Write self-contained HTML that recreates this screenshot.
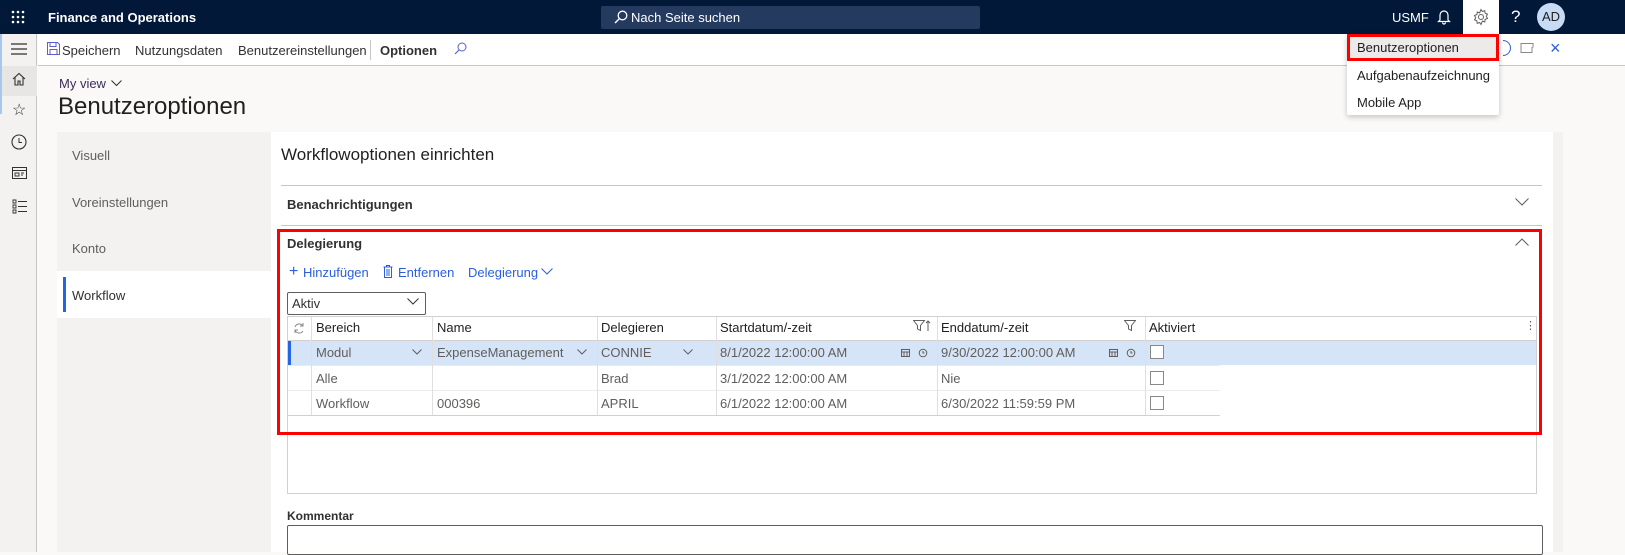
<!DOCTYPE html>
<html><head><meta charset="utf-8"><style>
*{box-sizing:border-box;margin:0;padding:0}
body{width:1625px;height:552px;overflow:hidden;background:#faf9f8;font-family:"Liberation Sans",sans-serif;font-size:13px;color:#323130;position:relative}
.a{position:absolute;white-space:nowrap}
.top{left:0;top:0;width:1625px;height:34px;background:#011839}
.w{color:#fff}
.cell{position:absolute;height:25px;line-height:25px;padding-left:5px;border-right:1px solid #e1dfdd;font-size:13px}
.chk{position:absolute;width:14px;height:14px;border:1px solid #8a8886;background:#fff}
</style></head><body>
<div class="a top"></div>
<svg class="a" style="left:11px;top:10px" width="14" height="14"><g fill="#fff"><circle cx="2" cy="2" r="1.3"/><circle cx="7" cy="2" r="1.3"/><circle cx="12" cy="2" r="1.3"/><circle cx="2" cy="7" r="1.3"/><circle cx="7" cy="7" r="1.3"/><circle cx="12" cy="7" r="1.3"/><circle cx="2" cy="12" r="1.3"/><circle cx="7" cy="12" r="1.3"/><circle cx="12" cy="12" r="1.3"/></g></svg>
<div class="a w" style="left:48px;top:10px;font-weight:bold;font-size:13px">Finance and Operations</div>
<div class="a" style="left:601px;top:6px;width:379px;height:23px;background:#243a5e;border-radius:2px"></div>
<svg class="a" style="left:614px;top:10px" width="14" height="14"><circle cx="8.5" cy="5.5" r="4.3" fill="none" stroke="#fff" stroke-width="1.3"/><path d="M5.5 8.5L1 13" stroke="#fff" stroke-width="1.5"/></svg>
<div class="a w" style="left:631px;top:10px;font-size:13px">Nach Seite suchen</div>
<div class="a w" style="left:1392px;top:10px;font-size:13px">USMF</div>
<svg class="a" style="left:1437px;top:9px" width="14" height="16"><path d="M3 11V6a4 4 0 0 1 8 0v5l1.5 1.5h-11z M5.5 13.5a1.5 1.5 0 0 0 3 0" fill="none" stroke="#fff" stroke-width="1.2"/></svg>
<div class="a" style="left:1463px;top:0;width:36px;height:34px;background:#fff"></div>
<svg class="a" style="left:1472px;top:8px" width="18" height="18" viewBox="0 0 18 18"><circle cx="9" cy="9" r="2.5" fill="none" stroke="#605e5c"/><path d="M9 1.5l1.4 2 2.4-.8.3 2.5 2.4.9-1.2 2.2 1.2 2.2-2.4.9-.3 2.5-2.4-.8L9 16.5l-1.4-2-2.4.8-.3-2.5-2.4-.9L3.7 9.7 2.5 7.5l2.4-.9.3-2.5 2.4.8z" fill="none" stroke="#605e5c"/></svg>
<div class="a w" style="left:1511px;top:7px;font-size:17px">?</div>
<div class="a" style="left:1537px;top:3px;width:28px;height:28px;border-radius:50%;background:#c7dbf5;color:#201f1e;text-align:center;line-height:28px;font-size:13px">AD</div>

<!-- left rail -->
<div class="a" style="left:0;top:34px;width:37px;height:518px;background:#f3f2f1;border-right:1px solid #c8c6c4"></div>
<div class="a" style="left:0;top:34px;width:2px;height:80px;background:#a9c6ef"></div>
<svg class="a" style="left:10px;top:42px" width="18" height="14"><path d="M1 2h16M1 7h16M1 12h16" stroke="#323130" stroke-width="1.2"/></svg>
<div class="a" style="left:2px;top:66px;width:35px;height:30px;background:#e8e6e4"></div>
<svg class="a" style="left:12px;top:72px" width="14" height="14"><path d="M1 7L7 1.5 13 7M3 5.5V13h3V9h2v4h3V5.5" fill="none" stroke="#323130" stroke-width="1.1"/></svg>
<div class="a" style="left:12px;top:100px;font-size:16px;color:#323130">☆</div>
<svg class="a" style="left:11px;top:134px" width="16" height="16"><circle cx="8" cy="8" r="7" fill="none" stroke="#323130" stroke-width="1.1"/><path d="M8 4v4.5h3" fill="none" stroke="#323130"/></svg>
<svg class="a" style="left:12px;top:167px" width="16" height="13"><rect x=".5" y=".5" width="14" height="11" fill="none" stroke="#323130"/><path d="M.5 3.5h14M3 6h4v3H3zM9 6h3M9 8h2" fill="none" stroke="#323130" stroke-width=".9"/></svg>
<svg class="a" style="left:12px;top:198px" width="16" height="16"><path d="M1 2h3v3H1zM1 7h3v3H1zM1 12h3v3H1zM6 3.5h9M6 8.5h9M6 13.5h9" fill="none" stroke="#323130" stroke-width=".9"/></svg>

<!-- action bar -->
<div class="a" style="left:38px;top:34px;width:1587px;height:32px;background:#fff;border-bottom:1px solid #c8c6c4"></div>
<svg class="a" style="left:47px;top:42px" width="13" height="13"><path d="M.5.5h10l2 2v10H.5z M3 .5v4h6v-4 M3 12.5v-5h7v5" fill="none" stroke="#5b5fc7" stroke-width="1"/></svg>
<div class="a" style="left:62px;top:43px">Speichern</div>
<div class="a" style="left:135px;top:43px">Nutzungsdaten</div>
<div class="a" style="left:238px;top:43px">Benutzereinstellungen</div>
<div class="a" style="left:370px;top:40px;width:1px;height:20px;background:#c8c6c4"></div>
<div class="a" style="left:380px;top:43px;font-weight:bold">Optionen</div>
<svg class="a" style="left:454px;top:42px" width="13" height="13"><circle cx="8" cy="5" r="4" fill="none" stroke="#5b5fc7"/><path d="M5 8L1 12" stroke="#5b5fc7" stroke-width="1.2"/></svg>
<div class="a" style="left:1503px;top:40px;width:8px;height:16px;border:1.5px solid #2b5fd9;border-left:none;border-radius:0 8px 8px 0"></div>
<svg class="a" style="left:1520px;top:42px" width="14" height="12"><path d="M9 1.5H1v9h11V5M9 1.5h4v4" fill="none" stroke="#8a8886"/></svg>
<div class="a" style="left:1550px;top:38px;color:#2b5fd9;font-size:18px">×</div>

<!-- title -->
<div class="a" style="left:59px;top:76px;color:#3b2e58;font-size:13px">My view</div>
<svg class="a" style="left:111px;top:80px" width="11" height="7"><path d="M.5.5l5 5 5-5" fill="none" stroke="#323130"/></svg>
<div class="a" style="left:58px;top:93px;font-size:24px;color:#201f1e">Benutzeroptionen</div>

<!-- tabs -->
<div class="a" style="left:57px;top:132px;width:214px;height:420px;background:#f3f2f1"></div>
<div class="a" style="left:72px;top:148px;color:#605e5c">Visuell</div>
<div class="a" style="left:72px;top:195px;color:#605e5c">Voreinstellungen</div>
<div class="a" style="left:72px;top:241px;color:#605e5c">Konto</div>
<div class="a" style="left:57px;top:271px;width:214px;height:47px;background:#fff"></div>
<div class="a" style="left:63px;top:277px;width:3px;height:35px;background:#2266e3"></div>
<div class="a" style="left:72px;top:288px;color:#323130">Workflow</div>

<!-- main panel -->
<div class="a" style="left:271px;top:132px;width:1282px;height:420px;background:#fff"></div>
<div class="a" style="left:1553px;top:132px;width:10px;height:420px;background:#f3f2f1"></div>
<div class="a" style="left:281px;top:145px;font-size:17px;color:#201f1e">Workflowoptionen einrichten</div>
<div class="a" style="left:281px;top:185px;width:1261px;height:1px;background:#c8c6c4"></div>
<div class="a" style="left:287px;top:197px;font-weight:bold">Benachrichtigungen</div>
<svg class="a" style="left:1515px;top:198px" width="14" height="8"><path d="M.5.5l6.5 6.5 6.5-6.5" fill="none" stroke="#605e5c"/></svg>
<div class="a" style="left:281px;top:225px;width:1261px;height:1px;background:#c8c6c4"></div>
<div class="a" style="left:287px;top:236px;font-weight:bold">Delegierung</div>
<svg class="a" style="left:1515px;top:238px" width="14" height="8"><path d="M.5 7.5L7 1l6.5 6.5" fill="none" stroke="#605e5c"/></svg>
<div class="a" style="left:289px;top:264px;color:#2b5fd9;font-size:16px;line-height:16px">+</div>
<div class="a" style="left:303px;top:265px;color:#2b5fd9">Hinzufügen</div>
<svg class="a" style="left:383px;top:265px" width="10" height="13"><path d="M.5 2h9M3.5 2V.5h3V2M1.5 2v10.5h7V2M4 4v7M6 4v7" fill="none" stroke="#2b5fd9"/></svg>
<div class="a" style="left:398px;top:265px;color:#2b5fd9">Entfernen</div>
<div class="a" style="left:468px;top:265px;color:#2b5fd9">Delegierung</div>
<svg class="a" style="left:541px;top:268px" width="12" height="7"><path d="M.5.5l5.5 5.5 5.5-5.5" fill="none" stroke="#2b5fd9"/></svg>
<div class="a" style="left:287px;top:292px;width:139px;height:23px;border:1px solid #605e5c;border-radius:2px;background:#fff"></div>
<div class="a" style="left:292px;top:296px">Aktiv</div>
<svg class="a" style="left:407px;top:298px" width="12" height="7"><path d="M.5.5l5.5 5.5 5.5-5.5" fill="none" stroke="#323130"/></svg>

<!-- grid -->
<div class="a" style="left:287px;top:316px;width:1250px;height:178px;border:1px solid #d2d0ce;background:#fff"></div>
<div class="a" style="left:288px;top:340px;width:1248px;height:1px;background:#d2d0ce"></div>
<div class="a" style="left:288px;top:341px;width:1248px;height:24px;background:#d6e4f8"></div>
<div class="a" style="left:288px;top:341px;width:3px;height:24px;background:#2266e3"></div>
<div class="a" style="left:288px;top:365px;width:932px;height:1px;background:#edebe9"></div>
<div class="a" style="left:288px;top:390px;width:932px;height:1px;background:#edebe9"></div>
<div class="a" style="left:288px;top:415px;width:932px;height:1px;background:#d2d0ce"></div>
<!-- vertical lines -->
<div class="a" style="left:311px;top:317px;width:1px;height:98px;background:#e1dfdd"></div>
<div class="a" style="left:432px;top:317px;width:1px;height:98px;background:#e1dfdd"></div>
<div class="a" style="left:597px;top:317px;width:1px;height:98px;background:#e1dfdd"></div>
<div class="a" style="left:716px;top:317px;width:1px;height:98px;background:#e1dfdd"></div>
<div class="a" style="left:937px;top:317px;width:1px;height:98px;background:#e1dfdd"></div>
<div class="a" style="left:1145px;top:317px;width:1px;height:98px;background:#e1dfdd"></div>
<svg class="a" style="left:293px;top:322px" width="12" height="12"><path d="M10 4A4.5 4.5 0 0 0 2 5M2 8a4.5 4.5 0 0 0 8 1M10 1v3H7M2 11V8h3" fill="none" stroke="#8a8886"/></svg>
<div class="a" style="left:316px;top:320px;color:#201f1e">Bereich</div>
<div class="a" style="left:437px;top:320px;color:#201f1e">Name</div>
<div class="a" style="left:601px;top:320px;color:#201f1e">Delegieren</div>
<div class="a" style="left:720px;top:320px;color:#201f1e">Startdatum/-zeit</div>
<div class="a" style="left:941px;top:320px;color:#201f1e">Enddatum/-zeit</div>
<div class="a" style="left:1149px;top:320px;color:#201f1e">Aktiviert</div>
<svg class="a" style="left:913px;top:320px" width="18" height="12"><path d="M.5.5h11L7.5 5.5v5l-3-1.5V5.5z M15 11V1M13 3l2-2 2 2" fill="none" stroke="#605e5c"/></svg>
<svg class="a" style="left:1124px;top:320px" width="12" height="12"><path d="M.5.5h11L7.5 5.5v5l-3-1.5V5.5z" fill="none" stroke="#605e5c"/></svg>
<div class="a" style="left:1525px;top:319px;color:#605e5c;font-size:11px">⋮</div>
<!-- row1 -->
<div class="a" style="left:316px;top:345px;color:#605e5c">Modul</div>
<div class="a" style="left:437px;top:345px;color:#605e5c">ExpenseManagement</div>
<div class="a" style="left:601px;top:345px;color:#605e5c">CONNIE</div>
<div class="a" style="left:720px;top:345px;color:#605e5c">8/1/2022 12:00:00 AM</div>
<div class="a" style="left:941px;top:345px;color:#605e5c">9/30/2022 12:00:00 AM</div>
<svg class="a" style="left:412px;top:349px" width="10" height="6"><path d="M.5.5l4.5 4.5 4.5-4.5" fill="none" stroke="#605e5c"/></svg>
<svg class="a" style="left:577px;top:349px" width="10" height="6"><path d="M.5.5l4.5 4.5 4.5-4.5" fill="none" stroke="#605e5c"/></svg>
<svg class="a" style="left:683px;top:349px" width="10" height="6"><path d="M.5.5l4.5 4.5 4.5-4.5" fill="none" stroke="#605e5c"/></svg>
<svg class="a" style="left:901px;top:348px" width="28" height="10"><rect x=".5" y="1.5" width="8" height="7" fill="none" stroke="#605e5c"/><path d="M.5 4h8M3 4v4M6 4v4" stroke="#605e5c"/><circle cx="22" cy="5" r="3.8" fill="none" stroke="#605e5c"/><path d="M22 3v2h1.5" fill="none" stroke="#605e5c"/></svg>
<svg class="a" style="left:1109px;top:348px" width="28" height="10"><rect x=".5" y="1.5" width="8" height="7" fill="none" stroke="#605e5c"/><path d="M.5 4h8M3 4v4M6 4v4" stroke="#605e5c"/><circle cx="22" cy="5" r="3.8" fill="none" stroke="#605e5c"/><path d="M22 3v2h1.5" fill="none" stroke="#605e5c"/></svg>
<div class="chk" style="left:1150px;top:345px"></div>
<!-- row2 -->
<div class="a" style="left:316px;top:371px;color:#605e5c">Alle</div>
<div class="a" style="left:601px;top:371px;color:#605e5c">Brad</div>
<div class="a" style="left:720px;top:371px;color:#605e5c">3/1/2022 12:00:00 AM</div>
<div class="a" style="left:941px;top:371px;color:#605e5c">Nie</div>
<div class="chk" style="left:1150px;top:371px"></div>
<!-- row3 -->
<div class="a" style="left:316px;top:396px;color:#605e5c">Workflow</div>
<div class="a" style="left:437px;top:396px;color:#605e5c">000396</div>
<div class="a" style="left:601px;top:396px;color:#605e5c">APRIL</div>
<div class="a" style="left:720px;top:396px;color:#605e5c">6/1/2022 12:00:00 AM</div>
<div class="a" style="left:941px;top:396px;color:#605e5c">6/30/2022 11:59:59 PM</div>
<div class="chk" style="left:1150px;top:396px"></div>

<!-- red box -->
<div class="a" style="left:277px;top:229px;width:1265px;height:206px;border:3px solid #f00"></div>

<div class="a" style="left:287px;top:509px;color:#323130;font-weight:bold;font-size:12px">Kommentar</div>
<div class="a" style="left:287px;top:525px;width:1256px;height:30px;border:1px solid #605e5c;border-radius:2px;background:#fff"></div>

<!-- dropdown menu -->
<div class="a" style="left:1347px;top:34px;width:152px;height:81px;background:#fff;box-shadow:0 2px 6px rgba(0,0,0,.22);border-radius:2px"></div>
<div class="a" style="left:1347px;top:34px;width:152px;height:27px;background:#edebe9;border:3px solid #f00"></div>
<div class="a" style="left:1357px;top:40px;color:#201f1e">Benutzeroptionen</div>
<div class="a" style="left:1357px;top:68px;color:#201f1e">Aufgabenaufzeichnung</div>
<div class="a" style="left:1357px;top:95px;color:#201f1e">Mobile App</div>
</body></html>
